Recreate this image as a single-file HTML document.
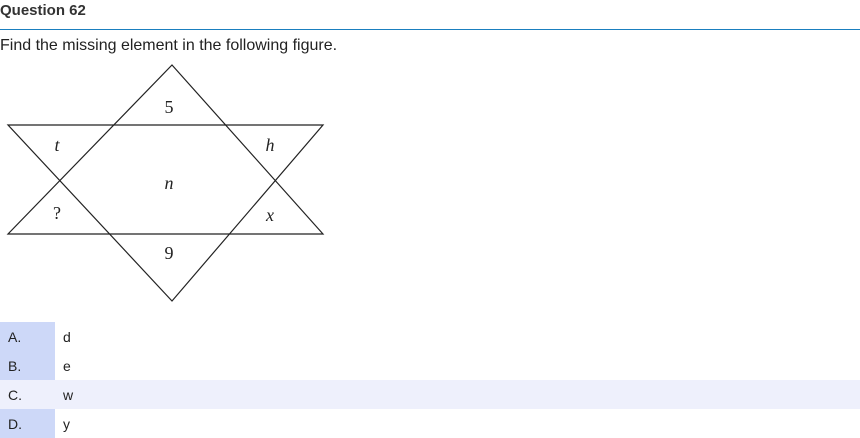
<html><head><style>
body{margin:0;width:860px;height:437px;background:#fff;font-family:"Liberation Sans",sans-serif;position:relative;overflow:hidden;color:#222}
.h{position:absolute;left:0;top:2px;font-size:15px;font-weight:bold;color:#333}
.line{position:absolute;left:0;top:29px;width:860px;height:1px;background:#1a7fbf}
.q{position:absolute;left:0;top:37px;font-size:16px}
.row{position:absolute;left:0;width:860px;height:29px;font-size:14px}
.row .l{position:absolute;left:0;top:0;width:55px;height:100%;background:#cdd8f8}
.row span{position:absolute;top:7px}
</style></head><body>
<div class="h">Question 62</div><div class="line"></div>
<div class="q">Find the missing element in the following figure.</div>
<svg style="position:absolute;left:0;top:0" width="340" height="310">
<g fill="none" stroke="#222" stroke-width="1.2">
<polygon points="8,125 323,125 172,301"/><polygon points="172,65 323,234 8,234"/></g>
<g font-family="Liberation Serif,serif" font-size="18" text-anchor="middle" fill="#222">
<text x="169" y="113">5</text><text x="57" y="151" font-style="italic">t</text>
<text x="270" y="151" font-style="italic">h</text><text x="169" y="189" font-style="italic">n</text>
<text x="57" y="219">?</text><text x="270" y="221" font-style="italic">x</text>
<text x="169" y="259">9</text></g></svg>
<div class="row" style="top:322px"><div class="l"></div><span style="left:8px">A.</span><span style="left:63px">d</span></div>
<div class="row" style="top:351px"><div class="l"></div><span style="left:8px">B.</span><span style="left:63px">e</span></div>
<div class="row" style="top:380px;background:#eef0fc"><span style="left:8px">C.</span><span style="left:63px">w</span></div>
<div class="row" style="top:409px"><div class="l"></div><span style="left:8px">D.</span><span style="left:63px">y</span></div>
</body></html>
